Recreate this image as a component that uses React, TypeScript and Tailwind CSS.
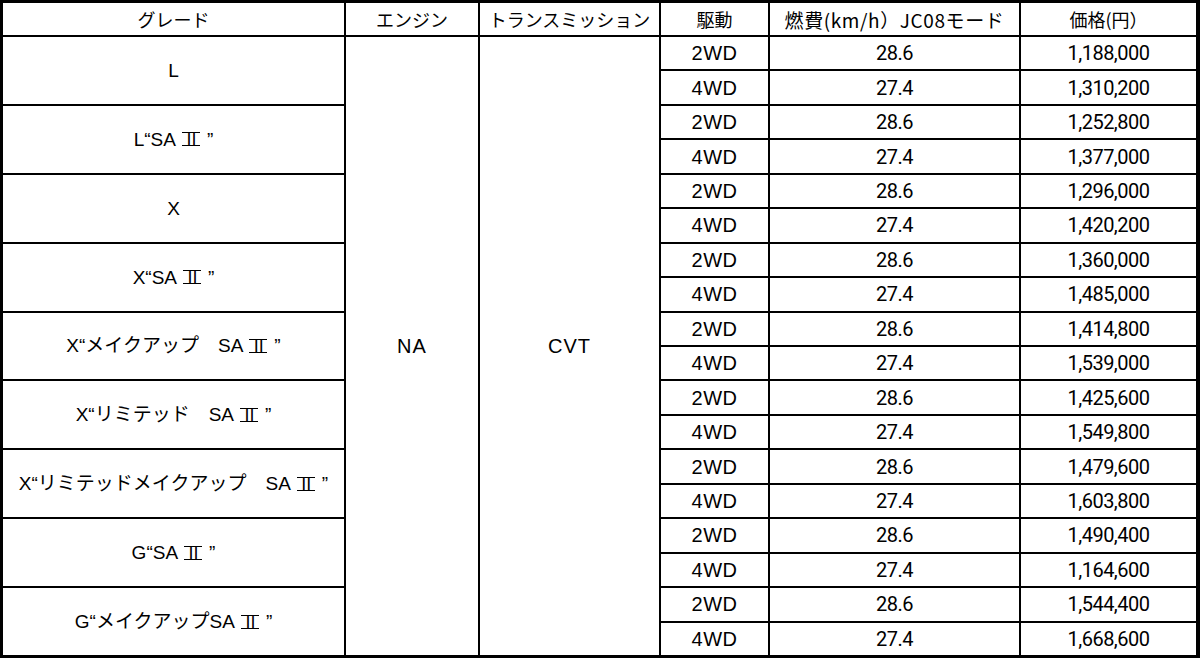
import React from "react";

const grades: { name: string; p2: string; p4: string }[] = [
  { name: "L", p2: "1,188,000", p4: "1,310,200" },
  { name: "L“SAⅡ”", p2: "1,252,800", p4: "1,377,000" },
  { name: "X", p2: "1,296,000", p4: "1,420,200" },
  { name: "X“SAⅡ”", p2: "1,360,000", p4: "1,485,000" },
  { name: "X“メイクアップ　SAⅡ”", p2: "1,414,800", p4: "1,539,000" },
  { name: "X“リミテッド　SAⅡ”", p2: "1,425,600", p4: "1,549,800" },
  { name: "X“リミテッドメイクアップ　SAⅡ”", p2: "1,479,600", p4: "1,603,800" },
  { name: "G“SAⅡ”", p2: "1,490,400", p4: "1,164,600" },
  { name: "G“メイクアップSAⅡ”", p2: "1,544,400", p4: "1,668,600" },
];

const rowStart = [
  "row-start-2",
  "row-start-3",
  "row-start-4",
  "row-start-5",
  "row-start-6",
  "row-start-7",
  "row-start-8",
  "row-start-9",
  "row-start-10",
  "row-start-11",
  "row-start-12",
  "row-start-13",
  "row-start-14",
  "row-start-15",
  "row-start-16",
  "row-start-17",
  "row-start-18",
  "row-start-19",
];

const jp = "font-['Noto_Sans_CJK_JP',sans-serif]";
const lat = "font-['Liberation_Sans','Noto_Sans_CJK_JP',sans-serif]";
const num = "font-['Roboto','Noto_Sans_CJK_JP',sans-serif] text-[20px] tracking-[-0.5px]";
const cell = "bg-white flex items-center justify-center text-black leading-none whitespace-pre";

function GradeName({ name }: { name: string }) {
  const parts = name.split("Ⅱ");
  if (parts.length === 1) return <>{name}</>;
  return (
    <>
      {parts[0]}
      <span className={`${jp} inline-block text-[17px] leading-[12px] h-[14px] border-y-[1.5px] border-black px-[1px] ml-[6px] mr-[7px] tracking-[-1px]`}>
        Ⅱ
      </span>
      {parts[1]}
    </>
  );
}

export default function App() {
  const headers = ["グレード", "エンジン", "トランスミッション", "駆動", "燃費(km/h）JC08モード", "価格(円）"];
  const headerCols = ["col-start-1", "col-start-2", "col-start-3", "col-start-4", "col-start-5", "col-start-6"];
  return (
    <div className="w-[1200px] h-[658px] bg-black pt-[3px] pb-[3px] pl-[3px] pr-[4px] overflow-hidden">
      <div className="grid h-full grid-cols-[341px_132px_179px_107px_249px_175px] grid-rows-[32px_repeat(18,minmax(0,1fr))] gap-[2px]">
        {headers.map((h, i) => (
          <div
            key={h}
            className={`${cell} ${jp} row-start-1 ${headerCols[i]} ${i === 4 ? "text-[19px] tracking-[0.6px]" : "text-[18px]"}`}
          >
            {h}
          </div>
        ))}
        {grades.map((g, i) => (
          <div key={g.name} className={`${cell} ${lat} text-[19px] col-start-1 row-span-2 ${rowStart[i * 2]}`}>
            <GradeName name={g.name} />
          </div>
        ))}
        <div className={`${cell} ${lat} text-[20px] tracking-[1px] col-start-2 row-start-2 row-span-18`}>NA</div>
        <div className={`${cell} ${lat} text-[20px] tracking-[1px] col-start-3 row-start-2 row-span-18`}>CVT</div>
        {grades.map((g, i) => (
          <React.Fragment key={g.name + "-d"}>
            <div className={`${cell} ${lat} text-[20px] tracking-[0.5px] col-start-4 ${rowStart[i * 2]}`}>2WD</div>
            <div className={`${cell} ${num} col-start-5 ${rowStart[i * 2]}`}>28.6</div>
            <div className={`${cell} ${num} col-start-6 ${rowStart[i * 2]}`}>{g.p2}</div>
            <div className={`${cell} ${lat} text-[20px] tracking-[0.5px] col-start-4 ${rowStart[i * 2 + 1]}`}>4WD</div>
            <div className={`${cell} ${num} col-start-5 ${rowStart[i * 2 + 1]}`}>27.4</div>
            <div className={`${cell} ${num} col-start-6 ${rowStart[i * 2 + 1]}`}>{g.p4}</div>
          </React.Fragment>
        ))}
      </div>
    </div>
  );
}
